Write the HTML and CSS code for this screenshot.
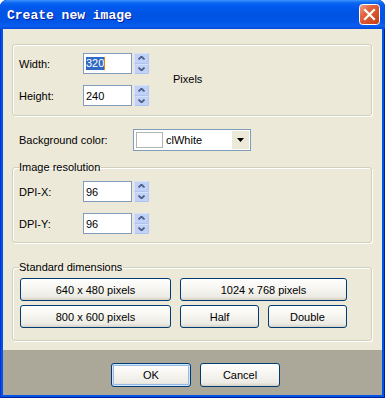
FILE: index.html
```html
<!DOCTYPE html>
<html lang="en">
<head>
  <meta charset="UTF-8">
  <title>Create new image</title>
  <link rel="stylesheet" href="styles.css">
</head>
<body>
  <div class="window">
    <div class="titlebar">
      <span class="title">Create new image</span>
      <button class="close" title="Close">
        <svg width="21" height="21" viewBox="0 0 21 21">
          <defs>
            <linearGradient id="cg" x1="0" y1="0" x2="1" y2="1">
              <stop offset="0" stop-color="#f0a48a"/>
              <stop offset="0.35" stop-color="#e2643f"/>
              <stop offset="1" stop-color="#c23a12"/>
            </linearGradient>
          </defs>
          <rect x="0.5" y="0.5" width="20" height="20" rx="3" fill="url(#cg)" stroke="#fff"/>
          <path d="M6 6 L15 15 M15 6 L6 15" stroke="#fff" stroke-width="2.2" stroke-linecap="square"/>
        </svg>
      </button>
    </div>

    <div class="client">
      <div class="main">
        <!-- size -->
        <div class="group size">
          <div class="rows">
            <div class="row">
              <label class="lbl">Width:</label>
              <div class="edit"><span class="sel">320</span><span class="caret"></span></div>
              <div class="spin"><span class="up"></span><span class="down"></span></div>
            </div>
            <div class="row">
              <label class="lbl">Height:</label>
              <div class="edit">240</div>
              <div class="spin"><span class="up"></span><span class="down"></span></div>
            </div>
          </div>
          <span class="unit">Pixels</span>
        </div>

        <!-- colour -->
        <div class="row color-row">
          <label class="lbl wide">Background color:</label>
          <div class="combo">
            <span class="swatch"></span>
            <span class="combo-text">clWhite</span>
            <span class="drop"></span>
          </div>
        </div>

        <!-- resolution -->
        <fieldset class="group res">
          <legend>Image resolution</legend>
          <div class="rows">
            <div class="row">
              <label class="lbl">DPI-X:</label>
              <div class="edit">96</div>
              <div class="spin"><span class="up"></span><span class="down"></span></div>
            </div>
            <div class="row">
              <label class="lbl">DPI-Y:</label>
              <div class="edit">96</div>
              <div class="spin"><span class="up"></span><span class="down"></span></div>
            </div>
          </div>
        </fieldset>

        <!-- presets -->
        <fieldset class="group dims">
          <legend>Standard dimensions</legend>
          <div class="presets">
            <button class="btn">640 x 480 pixels</button>
            <button class="btn span2">1024 x 768 pixels</button>
            <button class="btn">800 x 600 pixels</button>
            <button class="btn">Half</button>
            <button class="btn">Double</button>
          </div>
        </fieldset>
      </div>

      <div class="footer">
        <button class="btn dlg default">OK</button>
        <button class="btn dlg">Cancel</button>
      </div>
    </div>
  </div>
</body>
</html>
```

FILE: styles.css
```css
* { margin: 0; padding: 0; box-sizing: border-box; }
body {
  background: #fff;
  font-family: 'Liberation Sans', Arial, sans-serif;
  font-size: 11px;
  color: #000;
}
.window {
  width: 385px;
  height: 398px;
  display: flex;
  flex-direction: column;
  background: #0055e5;
  border-radius: 7px 7px 0 0;
  box-shadow: inset 1px 0 0 #0831d9, inset -1px 0 0 #001ea0, inset 0 -1px 0 #001ea0;
  overflow: hidden;
}
.titlebar {
  height: 29px;
  flex-shrink: 0;
  display: flex;
  align-items: center;
  padding: 0 5px 0 7px;
  background: linear-gradient(#3d95ff 0, #0a65f0 3px, #0058ee 7px, #0054e3 14px, #0055e8 22px, #0a5ff0 26px, #0348d8 29px);
  border-radius: 7px 7px 0 0;
}
.title {
  flex: 1;
  color: #fff;
  font-family: 'Liberation Mono', 'Courier New', monospace;
  font-weight: bold;
  font-size: 13px;
  text-shadow: 1px 1px 0 #0a1e9f;
  padding-top: 1px;
}
.close {
  width: 21px;
  height: 21px;
  border: none;
  background: none;
  display: block;
}
.close svg { display: block; }

.client {
  flex: 1;
  display: flex;
  flex-direction: column;
  margin: 0 3px 3px 3px;
}
.main {
  flex: 1;
  background: #ece9d8;
  padding: 15px 10px 0 9px;
}
.footer {
  height: 45px;
  background: #aca899;
  display: flex;
  justify-content: center;
  align-items: flex-start;
  gap: 9px;
  padding: 13px 0 0 6px;
}

/* group boxes */
.group {
  border: 1px solid #d0d0bf;
  border-radius: 3px;
  box-shadow: 1px 1px 0 #fff, inset 1px 1px 0 #fff;
}
fieldset.group { min-width: 0; }
legend {
  margin-left: 0;
  padding: 0 1px 0 0;
  line-height: 13px;
  color: #000;
}
.size {
  display: flex;
  align-items: center;
  padding: 8px 6px 9px 6px;
}
.res { margin-top: 10px; padding: 7px 6px 8px 6px; }
.dims { margin-top: 18px; padding: 4px 6px 12px 6px; }

.rows { display: flex; flex-direction: column; gap: 11px; }
.row { display: flex; align-items: center; }
.lbl { width: 64px; }
.lbl.wide { width: 114px; }
.unit { margin-left: 24px; margin-bottom: 1px; }
.color-row { margin: 13px 0 0 7px; }

/* edit + spinner */
.edit {
  width: 49px;
  height: 21px;
  border: 1px solid #7f9db9;
  background: #fff;
  padding-left: 2px;
  display: flex;
  align-items: center;
  font-size: 11px;
}
.sel { background: #316ac5; color: #fff; line-height: 13px; }
.caret { width: 1px; height: 13px; background: #e08a00; }
.spin {
  width: 15px;
  height: 21px;
  margin-left: 2px;
  display: flex;
  flex-direction: column;
  border-radius: 2px;
  background: #c6d3f7;
}
.spin span {
  flex: 1;
  border-radius: 2px;
  background: #c1d1f8 no-repeat center;
  border: 1px solid #d6e1fb;
  border-right-color: #b0c4f2;
  border-bottom-color: #b0c4f2;
}
.spin .up {
  background-image: url("data:image/svg+xml,%3Csvg xmlns='http://www.w3.org/2000/svg' width='7' height='4'%3E%3Cpath d='M0.5 3.5 L3.5 0.5 L6.5 3.5' fill='none' stroke='%234d6185' stroke-width='1.8'/%3E%3C/svg%3E");
}
.spin .down {
  background-image: url("data:image/svg+xml,%3Csvg xmlns='http://www.w3.org/2000/svg' width='7' height='4'%3E%3Cpath d='M0.5 0.5 L3.5 3.5 L6.5 0.5' fill='none' stroke='%234d6185' stroke-width='1.8'/%3E%3C/svg%3E");
}

/* combo */
.combo {
  width: 118px;
  height: 22px;
  border: 1px solid #7f9db9;
  background: #fff;
  display: flex;
  align-items: center;
  padding: 1px;
}
.swatch {
  width: 27px;
  height: 16px;
  margin-left: 1px;
  border: 1px solid #b4b4b4;
  background: #fff;
}
.combo-text { flex: 1; margin-left: 3px; }
.drop {
  width: 17px;
  height: 18px;
  background: #ece9d8 no-repeat center;
  background-image: url("data:image/svg+xml,%3Csvg xmlns='http://www.w3.org/2000/svg' width='7' height='4'%3E%3Cpath d='M0 0 H7 L3.5 4 Z' fill='%23000'/%3E%3C/svg%3E");
}

/* buttons */
.btn {
  height: 23px;
  border: 1px solid #003c74;
  border-radius: 3px;
  background: linear-gradient(#fff 0, #f7f6f2 40%, #ecebe4 85%, #d6d0c5 100%);
  font-family: 'Liberation Sans', Arial, sans-serif;
  font-size: 11px;
  color: #000;
}
.presets {
  display: grid;
  grid-template-columns: 151px 79px 79px;
  column-gap: 9px;
  row-gap: 4px;
  margin-left: 1px;
}
.span2 { grid-column: span 2; }
.dlg { width: 80px; height: 24px; }
.default { box-shadow: inset 0 0 0 1px #cee7ff, inset 0 0 0 2px #98b8ea; }
```
